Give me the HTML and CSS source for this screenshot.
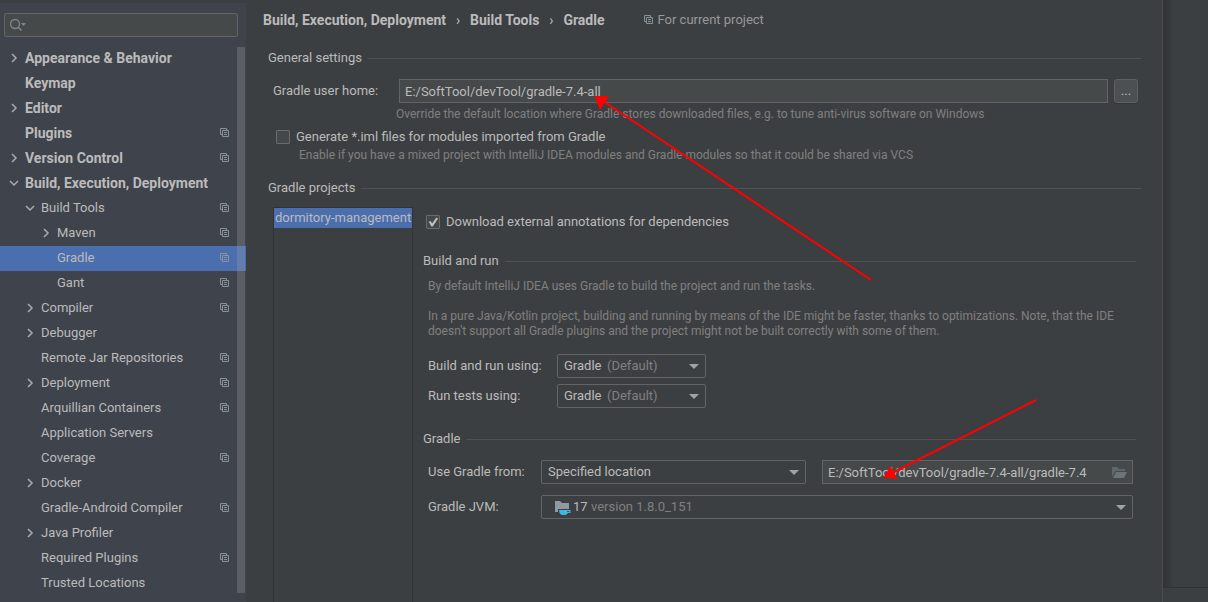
FILE: index.html
```
<!DOCTYPE html>
<html lang="en">
<head>
<meta charset="utf-8">
<title>Settings - Gradle</title>
<link rel="stylesheet" href="styles.css">
</head>
<body>
<svg class="symbols" aria-hidden="true">
  <symbol id="right" viewBox="0 0 10 10"><path d="M3 1l4 4-4 4" fill="none" stroke="#a9abae" stroke-width="1.5"/></symbol>
  <symbol id="down" viewBox="0 0 10 10"><path d="M1 3l4 4 4-4" fill="none" stroke="#a9abae" stroke-width="1.5"/></symbol>
  <symbol id="copy" viewBox="0 0 10 10"><path d="M2.500 6.500H.5V.5h6v2M2.500 2.500h6v6h-6zM4 4.500h3M4 6.500h3" fill="none" stroke="#87939a"/></symbol>
</svg>
<div class="window">
  <aside class="sidebar">
    <div class="search">
      <svg class="search-icon" width="18" height="14" viewBox="0 0 18 14" aria-hidden="true"><circle cx="6" cy="6" r="4.500" fill="none" stroke="#7d878c" stroke-width="1.300"/><path d="M9 9l3.500 3.500" stroke="#7d878c" stroke-width="1.500"/><path d="M12 5h5l-2.500 3z" fill="#7d878c"/></svg>
      <input class="search-input" type="text" aria-label="Search settings">
    </div>
    <nav class="tree" aria-label="Settings">
      <a class="node top" href="#"><svg class="chev"><use href="#right"/></svg><span>Appearance &amp; Behavior</span></a>
      <a class="node top" href="#"><span class="chev"></span><span>Keymap</span></a>
      <a class="node top" href="#"><svg class="chev"><use href="#right"/></svg><span>Editor</span></a>
      <a class="node top" href="#"><span class="chev"></span><span>Plugins</span><svg class="copy"><use href="#copy"/></svg></a>
      <a class="node top" href="#"><svg class="chev"><use href="#right"/></svg><span>Version Control</span><svg class="copy"><use href="#copy"/></svg></a>
      <a class="node top" href="#"><svg class="chev"><use href="#down"/></svg><span>Build, Execution, Deployment</span></a>
      <a class="node sub" href="#"><svg class="chev"><use href="#down"/></svg><span>Build Tools</span><svg class="copy"><use href="#copy"/></svg></a>
      <a class="node leaf" href="#"><svg class="chev"><use href="#right"/></svg><span>Maven</span><svg class="copy"><use href="#copy"/></svg></a>
      <a class="node leaf selected" href="#" aria-current="page"><span class="chev"></span><span>Gradle</span><svg class="copy"><use href="#copy"/></svg></a>
      <a class="node leaf" href="#"><span class="chev"></span><span>Gant</span><svg class="copy"><use href="#copy"/></svg></a>
      <a class="node sub" href="#"><svg class="chev"><use href="#right"/></svg><span>Compiler</span><svg class="copy"><use href="#copy"/></svg></a>
      <a class="node sub" href="#"><svg class="chev"><use href="#right"/></svg><span>Debugger</span></a>
      <a class="node sub" href="#"><span class="chev"></span><span>Remote Jar Repositories</span><svg class="copy"><use href="#copy"/></svg></a>
      <a class="node sub" href="#"><svg class="chev"><use href="#right"/></svg><span>Deployment</span><svg class="copy"><use href="#copy"/></svg></a>
      <a class="node sub" href="#"><span class="chev"></span><span>Arquillian Containers</span><svg class="copy"><use href="#copy"/></svg></a>
      <a class="node sub" href="#"><span class="chev"></span><span>Application Servers</span></a>
      <a class="node sub" href="#"><span class="chev"></span><span>Coverage</span><svg class="copy"><use href="#copy"/></svg></a>
      <a class="node sub" href="#"><svg class="chev"><use href="#right"/></svg><span>Docker</span></a>
      <a class="node sub" href="#"><span class="chev"></span><span>Gradle-Android Compiler</span><svg class="copy"><use href="#copy"/></svg></a>
      <a class="node sub" href="#"><svg class="chev"><use href="#right"/></svg><span>Java Profiler</span></a>
      <a class="node sub" href="#"><span class="chev"></span><span>Required Plugins</span><svg class="copy"><use href="#copy"/></svg></a>
      <a class="node sub" href="#"><span class="chev"></span><span>Trusted Locations</span></a>
      <span class="scrollbar"></span>
    </nav>
  </aside>

  <main class="page">
    <header class="crumbs">
      <span class="crumb">Build, Execution, Deployment</span><span class="sep">›</span><span class="crumb">Build Tools</span><span class="sep">›</span><span class="crumb">Gradle</span>
      <span class="scope"><svg class="copy"><use href="#copy"/></svg>For current project</span>
    </header>

    <h2 class="title">General settings</h2>
    <div class="home-row">
      <label class="home-label" for="home">Gradle user home:</label>
      <input class="field" id="home" type="text" value="E:/SoftTool/devTool/gradle-7.4-all">
      <button class="browse" type="button" aria-label="Browse"><span>...</span></button>
    </div>
    <p class="note home-note">Override the default location where Gradle stores downloaded files, e.g. to tune anti-virus software on Windows</p>
    <label class="check iml"><input type="checkbox">Generate *.iml files for modules imported from Gradle</label>
    <p class="note iml-note">Enable if you have a mixed project with IntelliJ IDEA modules and Gradle modules so that it could be shared via VCS</p>

    <h2 class="title projects-title">Gradle projects</h2>
    <div class="projects">
      <ul class="project-list"><li class="project">dormitory-management</li></ul>
      <section class="details">
        <label class="check"><input type="checkbox" checked>Download external annotations for dependencies</label>
        <h3 class="title build-title">Build and run</h3>
        <div class="notes">
          <p class="note">By default IntelliJ IDEA uses Gradle to build the project and run the tasks.</p>
          <p class="note">In a pure Java/Kotlin project, building and running by means of the IDE might be faster, thanks to optimizations. Note, that the IDE doesn't support all Gradle plugins and the project might not be built correctly with some of them.</p>
        </div>
        <div class="form build-form">
          <label for="build">Build and run using:</label>
          <div class="combo"><select id="build"><option>Gradle</option></select><span class="hint">(Default)</span></div>
          <label for="tests">Run tests using:</label>
          <div class="combo"><select id="tests"><option>Gradle</option></select><span class="hint">(Default)</span></div>
        </div>
        <h3 class="title gradle-title">Gradle</h3>
        <div class="form gradle-form">
          <label for="from">Use Gradle from:</label>
          <div class="combo"><select id="from"><option>Specified location</option></select></div>
          <div class="path">
            <input class="field" type="text" aria-label="Gradle location" value="E:/SoftTool/devTool/gradle-7.4-all/gradle-7.4">
            <svg class="folder" width="15" height="11" viewBox="0 0 15 11" aria-hidden="true"><path d="M0 10V0h5l2 2h6v2H3.500L0 10z" fill="#5f676b"/><path d="M4 5h11l-3 6H1z" fill="#69757b"/></svg>
          </div>
          <label for="jvm">Gradle JVM:</label>
          <div class="combo jvm">
            <select id="jvm"><option>17</option></select>
            <svg class="jdk" width="16" height="14" viewBox="0 0 16 14" aria-hidden="true"><path d="M0 0h5l2 2h7v6H3v3H0z" fill="#9099a0"/><path d="M4 9h11.500v3H13l-2 2H6.500L4.500 12z" fill="#40b6e0"/><path d="M12 10.200h2.300v.800H12z" fill="#3c3f41"/></svg>
            <span class="hint">version 1.8.0_151</span>
          </div>
        </div>
      </section>
    </div>
  </main>
  <div class="backdrop"></div>
</div>
<svg class="annotations" width="1208" height="602" viewBox="0 0 1208 602" aria-hidden="true">
  <g fill="#f00" stroke="#f00" stroke-width="2">
    <path d="M603 101L871 280M892 473L1036 400" fill="none"/>
    <path d="M594.500 96h14.500L600 110zM883.500 477.500L890.500 466 897.500 479z" stroke="none"/>
  </g>
</svg>
</body>
</html>
```
FILE: styles.css
```
* { box-sizing: border-box; }
body {
  margin: 0;
  background: #3c3f41;
  color: #bbbbbb;
  font: 13px/20px Roboto, "Noto Sans", sans-serif;
}
h2, h3, p, ul { margin: 0; padding: 0; }
input, select, button { font: inherit; color: inherit; }
.symbols { position: absolute; width: 0; height: 0; }
.window { display: flex; height: 100vh; overflow: hidden; }

.sidebar { flex: 0 0 246px; margin-top: 3px; background: #3f434c; }
.search { position: relative; margin: 10px 8px 9px 4px; height: 24px; }
.search-icon { position: absolute; left: 5px; top: 5px; }
.search-input {
  width: 100%;
  height: 24px;
  padding: 0 8px 0 26px;
  background: #45494a;
  border: 1px solid #646464;
  border-radius: 2px;
}
.tree { position: relative; }
.node {
  display: flex;
  align-items: center;
  gap: 6px;
  height: 25px;
  padding-right: 16px;
  padding-bottom: 2px;
  color: inherit;
  text-decoration: none;
  white-space: nowrap;
}
.top { padding-left: 9px; font-size: 14px; font-weight: 700; }
.sub { padding-left: 25px; }
.leaf { padding-left: 41px; }
.selected { background: #4b6eaf; }
.chev { flex: none; width: 10px; height: 10px; }
.copy { flex: none; width: 10px; height: 10px; }
.node .copy { margin-left: auto; }
.scrollbar {
  position: absolute;
  top: 1px;
  right: 1px;
  width: 8px;
  height: 546px;
  background: rgba(166, 166, 166, 0.27);
}

.page {
  flex: 1;
  min-width: 0;
  display: flex;
  flex-direction: column;
  padding: 10px 21px 0 22px;
  border-right: 1px solid #4b4e50;
}
.crumbs { display: flex; margin-left: -5px; white-space: nowrap; }
.crumb { font-size: 14px; font-weight: 700; }
.sep { width: 24px; text-align: center; font-size: 14px; }
.scope { display: flex; align-items: center; gap: 4px; margin-left: 39px; color: #999999; }
.title {
  display: flex;
  align-items: center;
  gap: 6px;
  margin-top: 18px;
  font-size: 13px;
  font-weight: 400;
}
.title::after { content: ""; flex: 1; height: 1px; background: #515151; }
.home-row { display: flex; margin: 11px 3px 0 5px; }
.home-label { width: 126px; line-height: 24px; }
.field {
  flex: 1;
  min-width: 0;
  height: 24px;
  padding: 0 5px;
  background: #45494a;
  border: 1px solid #646464;
}
.browse {
  width: 24px;
  height: 24px;
  margin-left: 6px;
  padding: 0;
  background: #4c5052;
  border: 1px solid #5e6060;
  border-radius: 3px;
  box-shadow: 0 1px 0 #343638;
}
.note { color: #808080; font-size: 12px; line-height: 15px; }
.home-note { margin: 4px 0 0 128px; }
.check { display: flex; align-items: center; gap: 6px; }
.check input {
  appearance: none;
  width: 14px;
  height: 14px;
  margin: 0;
  background: #43494a;
  border: 1px solid #6b6b6b;
  border-radius: 1px;
}
.check input:checked::before {
  content: "";
  display: block;
  width: 12px;
  height: 12px;
  background: #c0c0c0;
  clip-path: polygon(15% 48%, 30% 42%, 43% 63%, 78% 12%, 92% 20%, 48% 88%, 36% 88%);
}
.iml { margin: 5px 0 0 8px; }
.iml-note { margin: 1px 0 0 31px; }
.projects-title { margin-top: 15px; }
.projects { flex: 1; display: flex; margin-top: 9px; }
.project-list {
  flex: none;
  width: 140px;
  margin-left: 5px;
  border: 1px solid #323232;
  border-bottom: 0;
  list-style: none;
}
.project { padding-left: 1px; overflow: hidden; background: #4b6eaf; white-space: nowrap; }
.details { flex: 1; min-width: 0; padding: 5px 5px 0 10px; }
.details .check { margin-left: 3px; }
.build-title { margin-top: 19px; }
.notes { display: grid; gap: 15px; margin: 8px 5px 0; }
.form { display: grid; align-items: center; margin: 15px 3px 0 5px; }
.build-form { grid-template-columns: 129px 149px; row-gap: 6px; }
.gradle-title { margin-top: 21px; }
.gradle-form { grid-template-columns: 113px minmax(0, 265fr) 16px minmax(0, 311fr); row-gap: 11px; margin-top: 11px; }
.combo { position: relative; height: 24px; }
.combo select {
  appearance: none;
  width: 100%;
  height: 24px;
  padding: 0 20px 0 6px;
  background: #3c3f41;
  border: 1px solid #646464;
  border-radius: 2px;
}
.combo::after {
  content: "";
  position: absolute;
  right: 7px;
  top: 10px;
  border: 5px solid transparent;
  border-top-color: #a0a3a5;
  border-bottom: 0;
}
.hint { position: absolute; left: 50px; top: 2px; color: #808080; pointer-events: none; }
.path { grid-column: 4; position: relative; display: flex; }
.folder { position: absolute; right: 6px; top: 7px; }
.jvm { grid-column: 2 / 5; }
.jvm select { padding-left: 31px; }
.jdk { position: absolute; left: 14px; top: 6px; pointer-events: none; }

.backdrop {
  flex: 0 0 45px;
  margin-bottom: 14px;
  border-bottom: 1px solid #323232;
  background: linear-gradient(90deg, #2f3133, #3c3f41 10px);
}
.annotations { position: absolute; left: 0; top: 0; pointer-events: none; }
```
